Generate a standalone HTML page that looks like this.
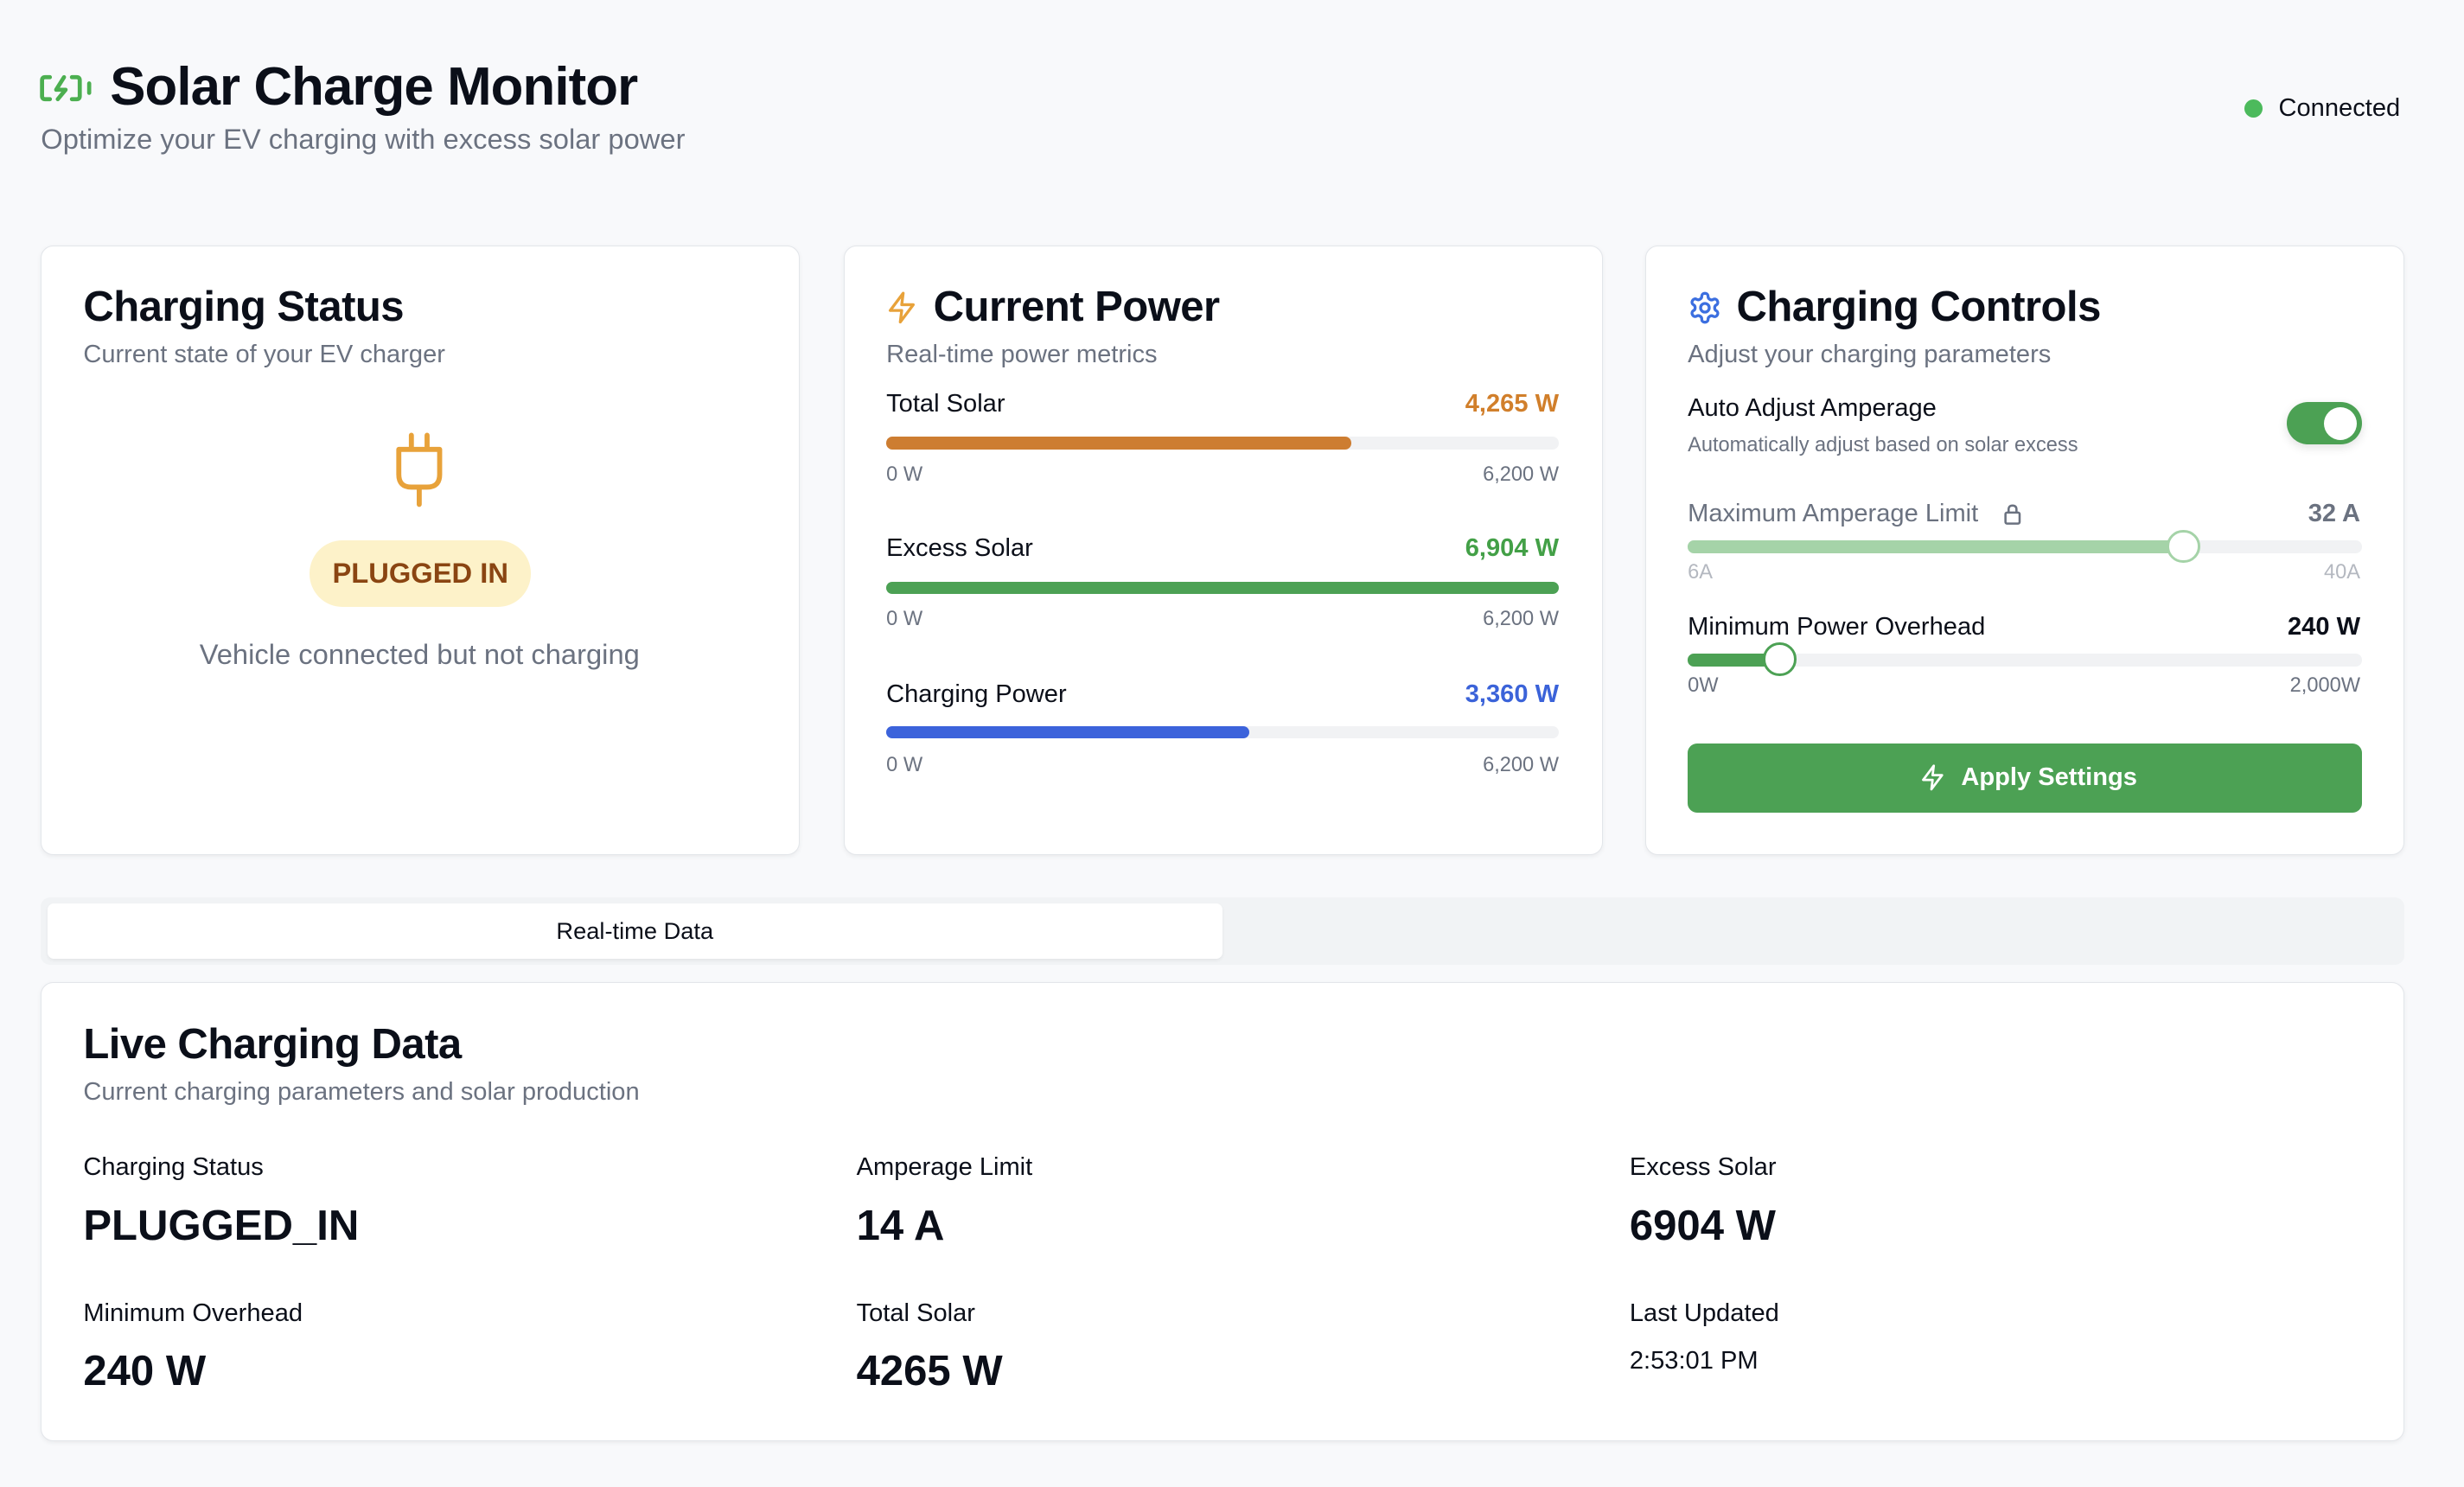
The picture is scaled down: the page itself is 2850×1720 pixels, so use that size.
<!DOCTYPE html>
<html><head><meta charset="utf-8"><style>
html,body{margin:0;padding:0;background:#f8f9fb;}
body{width:2850px;height:1720px;overflow:hidden;}
#w{position:relative;width:1568px;height:946px;zoom:1.81760;font-family:"Liberation Sans",sans-serif;color:#0b0f19;}
.a{position:absolute;white-space:nowrap;}
.card{position:absolute;background:#fff;border:1px solid #e3e6ea;border-radius:8px;box-shadow:0 1px 3px rgba(0,0,0,.06);}
.t{font-size:27px;font-weight:bold;letter-spacing:-0.3px;}
.s{font-size:16px;color:#6b7280;}
.l{font-size:16px;}
.bar{position:absolute;height:8px;border-radius:4px;background:#f1f2f4;}
.bar i{display:block;height:8px;border-radius:4px;}
.sc{font-size:13px;color:#6b7280;}
.v{font-size:27px;font-weight:bold;}
</style></head><body><div id="w">
<svg class="a" style="left:25px;top:45px" width="36" height="22" viewBox="0 0 36 22" fill="none" stroke="#4caf50" stroke-width="2.6" stroke-linecap="round" stroke-linejoin="round"><path d="M7 4H4Q2 4 2 6V16Q2 18 4 18H7M21 4H24Q26 4 26 6V16Q26 18 24 18H21M16 4L11 12H17L12 18M32 8V14"/></svg>
<div class="a" style="left:70px;top:36px;font-size:34px;font-weight:bold;letter-spacing:-0.5px">Solar Charge Monitor</div>
<div class="a" style="left:26px;top:78px;font-size:18px;color:#6b7280">Optimize your EV charging with excess solar power</div>
<div class="a" style="left:1428px;top:63px;width:12px;height:12px;border-radius:50%;background:#4cba5c"></div>
<div class="a" style="left:1450px;top:60px;font-size:16px">Connected</div>

<div class="card" style="left:26px;top:156px;width:482px;height:387px"></div>
<div class="a t" style="left:53px;top:180px">Charging Status</div>
<div class="a s" style="left:53px;top:217px">Current state of your EV charger</div>
<svg class="a" style="left:250px;top:274px" width="34" height="50" viewBox="0 0 34 50" fill="none" stroke="#e8a23a" stroke-width="3.2" stroke-linecap="round" stroke-linejoin="round"><path d="M12 3V12M22 3V12M4 12H30V28Q30 36 22 36H12Q4 36 4 28ZM17 36V47"/></svg>
<div class="a" style="left:197px;top:344px;width:141px;height:42px;border-radius:21px;background:#fdf2c9;color:#8a4512;font-size:18px;font-weight:bold;text-align:center;line-height:42px">PLUGGED IN</div>
<div class="a" style="left:26px;width:482px;top:406px;text-align:center;font-size:18px;color:#6b7280">Vehicle connected but not charging</div>

<div class="card" style="left:537px;top:156px;width:482px;height:387px"></div>
<svg class="a" style="left:563px;top:184px" width="22" height="24" viewBox="0 0 24 24" fill="none" stroke="#e8a23a" stroke-width="2" stroke-linejoin="round"><path d="M13 2L4 14H12L11 22L20 10H12Z"/></svg>
<div class="a t" style="left:594px;top:180px">Current Power</div>
<div class="a s" style="left:564px;top:217px">Real-time power metrics</div>

<div class="a l" style="left:564px;top:248px">Total Solar</div>
<div class="a l" style="right:576px;top:248px;color:#d17f2b;font-weight:bold">4,265 W</div>
<div class="bar" style="left:564px;top:278px;width:428px"><i style="width:296px;background:#cd7d31"></i></div>
<div class="a sc" style="left:564px;top:295px">0 W</div><div class="a sc" style="right:576px;top:295px">6,200 W</div>

<div class="a l" style="left:564px;top:340px">Excess Solar</div>
<div class="a l" style="right:576px;top:340px;color:#43a047;font-weight:bold">6,904 W</div>
<div class="bar" style="left:564px;top:370px;width:428px"><i style="width:428px;background:#4ca154"></i></div>
<div class="a sc" style="left:564px;top:387px">0 W</div><div class="a sc" style="right:576px;top:387px">6,200 W</div>

<div class="a l" style="left:564px;top:433px">Charging Power</div>
<div class="a l" style="right:576px;top:433px;color:#3b63d9;font-weight:bold">3,360 W</div>
<div class="bar" style="left:564px;top:462px;width:428px"><i style="width:231px;background:#3c63db"></i></div>
<div class="a sc" style="left:564px;top:480px">0 W</div><div class="a sc" style="right:576px;top:480px">6,200 W</div>

<div class="card" style="left:1047px;top:156px;width:482px;height:387px"></div>
<svg class="a" style="left:1074px;top:185px" width="22" height="22" viewBox="0 0 24 24" fill="none" stroke="#3c6fe0" stroke-width="2" stroke-linejoin="round"><circle cx="12" cy="12" r="3"/><path d="M12.2 2h-.4a2 2 0 0 0-2 2v.2a2 2 0 0 1-1 1.7l-.4.3a2 2 0 0 1-2 0l-.2-.1a2 2 0 0 0-2.7.7l-.2.4a2 2 0 0 0 .7 2.7l.2.1a2 2 0 0 1 1 1.7v.5a2 2 0 0 1-1 1.7l-.2.1a2 2 0 0 0-.7 2.7l.2.4a2 2 0 0 0 2.7.7l.2-.1a2 2 0 0 1 2 0l.4.3a2 2 0 0 1 1 1.7V20a2 2 0 0 0 2 2h.4a2 2 0 0 0 2-2v-.2a2 2 0 0 1 1-1.7l.4-.3a2 2 0 0 1 2 0l.2.1a2 2 0 0 0 2.7-.7l.2-.4a2 2 0 0 0-.7-2.7l-.2-.1a2 2 0 0 1-1-1.7v-.5a2 2 0 0 1 1-1.7l.2-.1a2 2 0 0 0 .7-2.7l-.2-.4a2 2 0 0 0-2.7-.7l-.2.1a2 2 0 0 1-2 0l-.4-.3a2 2 0 0 1-1-1.7V4a2 2 0 0 0-2-2z"/></svg>
<div class="a t" style="left:1105px;top:180px">Charging Controls</div>
<div class="a s" style="left:1074px;top:217px">Adjust your charging parameters</div>
<div class="a l" style="left:1074px;top:251px">Auto Adjust Amperage</div>
<div class="a" style="left:1074px;top:276px;font-size:13px;color:#6b7280">Automatically adjust based on solar excess</div>
<div class="a" style="left:1455px;top:256px;width:48px;height:27px;border-radius:14px;background:#4ca154;box-shadow:0 2px 6px rgba(0,0,0,.12)"></div>
<div class="a" style="left:1479px;top:259px;width:21px;height:21px;border-radius:50%;background:#fff"></div>
<div class="a l" style="left:1074px;top:318px;color:#6b7280">Maximum Amperage Limit</div>
<svg class="a" style="left:1274px;top:320px" width="13" height="14" viewBox="0 0 13 14" fill="none" stroke="#6b7280" stroke-width="1.4"><rect x="2" y="6" width="9" height="7" rx="1"/><path d="M4 6V4Q4 1.5 6.5 1.5Q9 1.5 9 4V6"/></svg>
<div class="a l" style="right:66px;top:318px;color:#6b7280;font-weight:bold">32 A</div>
<div class="bar" style="left:1074px;top:344px;width:429px"><i style="width:316px;background:#a5d3a8"></i></div>
<div class="a" style="left:1379px;top:337px;width:18px;height:18px;border-radius:50%;background:#fff;border:2px solid #a5d3a8"></div>
<div class="a sc" style="left:1074px;top:357px;color:#b4b8c0">6A</div><div class="a sc" style="right:66px;top:357px;color:#b4b8c0">40A</div>
<div class="a l" style="left:1074px;top:390px">Minimum Power Overhead</div>
<div class="a l" style="right:66px;top:390px;font-weight:bold">240 W</div>
<div class="bar" style="left:1074px;top:416px;width:429px"><i style="width:59px;background:#4ca154"></i></div>
<div class="a" style="left:1122px;top:409px;width:18px;height:18px;border-radius:50%;background:#fff;border:2px solid #4ca154"></div>
<div class="a sc" style="left:1074px;top:429px">0W</div><div class="a sc" style="right:66px;top:429px">2,000W</div>
<div class="a" style="left:1074px;top:473px;width:429px;height:44px;border-radius:6px;background:#4ca154"></div>
<svg class="a" style="left:1221px;top:486px" width="18" height="18" viewBox="0 0 24 24" fill="none" stroke="#fff" stroke-width="2" stroke-linejoin="round"><path d="M13 2L4 14H12L11 22L20 10H12Z"/></svg>
<div class="a" style="left:1248px;top:486px;font-size:16px;color:#fff;font-weight:bold">Apply Settings</div>

<div class="a" style="left:26px;top:571px;width:1504px;height:43px;border-radius:6px;background:#f1f3f5"></div>
<div class="a" style="left:30px;top:575px;width:748px;height:35px;border-radius:4px;background:#fff;box-shadow:0 1px 2px rgba(0,0,0,.06);text-align:center;line-height:35px;font-size:15px">Real-time Data</div>

<div class="card" style="left:26px;top:625px;width:1503px;height:291px"></div>
<div class="a t" style="left:53px;top:649px">Live Charging Data</div>
<div class="a s" style="left:53px;top:686px">Current charging parameters and solar production</div>
<div class="a l" style="left:53px;top:734px">Charging Status</div>
<div class="a v" style="left:53px;top:765px">PLUGGED_IN</div>
<div class="a l" style="left:545px;top:734px">Amperage Limit</div>
<div class="a v" style="left:545px;top:765px">14 A</div>
<div class="a l" style="left:1037px;top:734px">Excess Solar</div>
<div class="a v" style="left:1037px;top:765px">6904 W</div>
<div class="a l" style="left:53px;top:827px">Minimum Overhead</div>
<div class="a v" style="left:53px;top:857px">240 W</div>
<div class="a l" style="left:545px;top:827px">Total Solar</div>
<div class="a v" style="left:545px;top:857px">4265 W</div>
<div class="a l" style="left:1037px;top:827px">Last Updated</div>
<div class="a l" style="left:1037px;top:857px">2:53:01 PM</div>
</div></body></html>
